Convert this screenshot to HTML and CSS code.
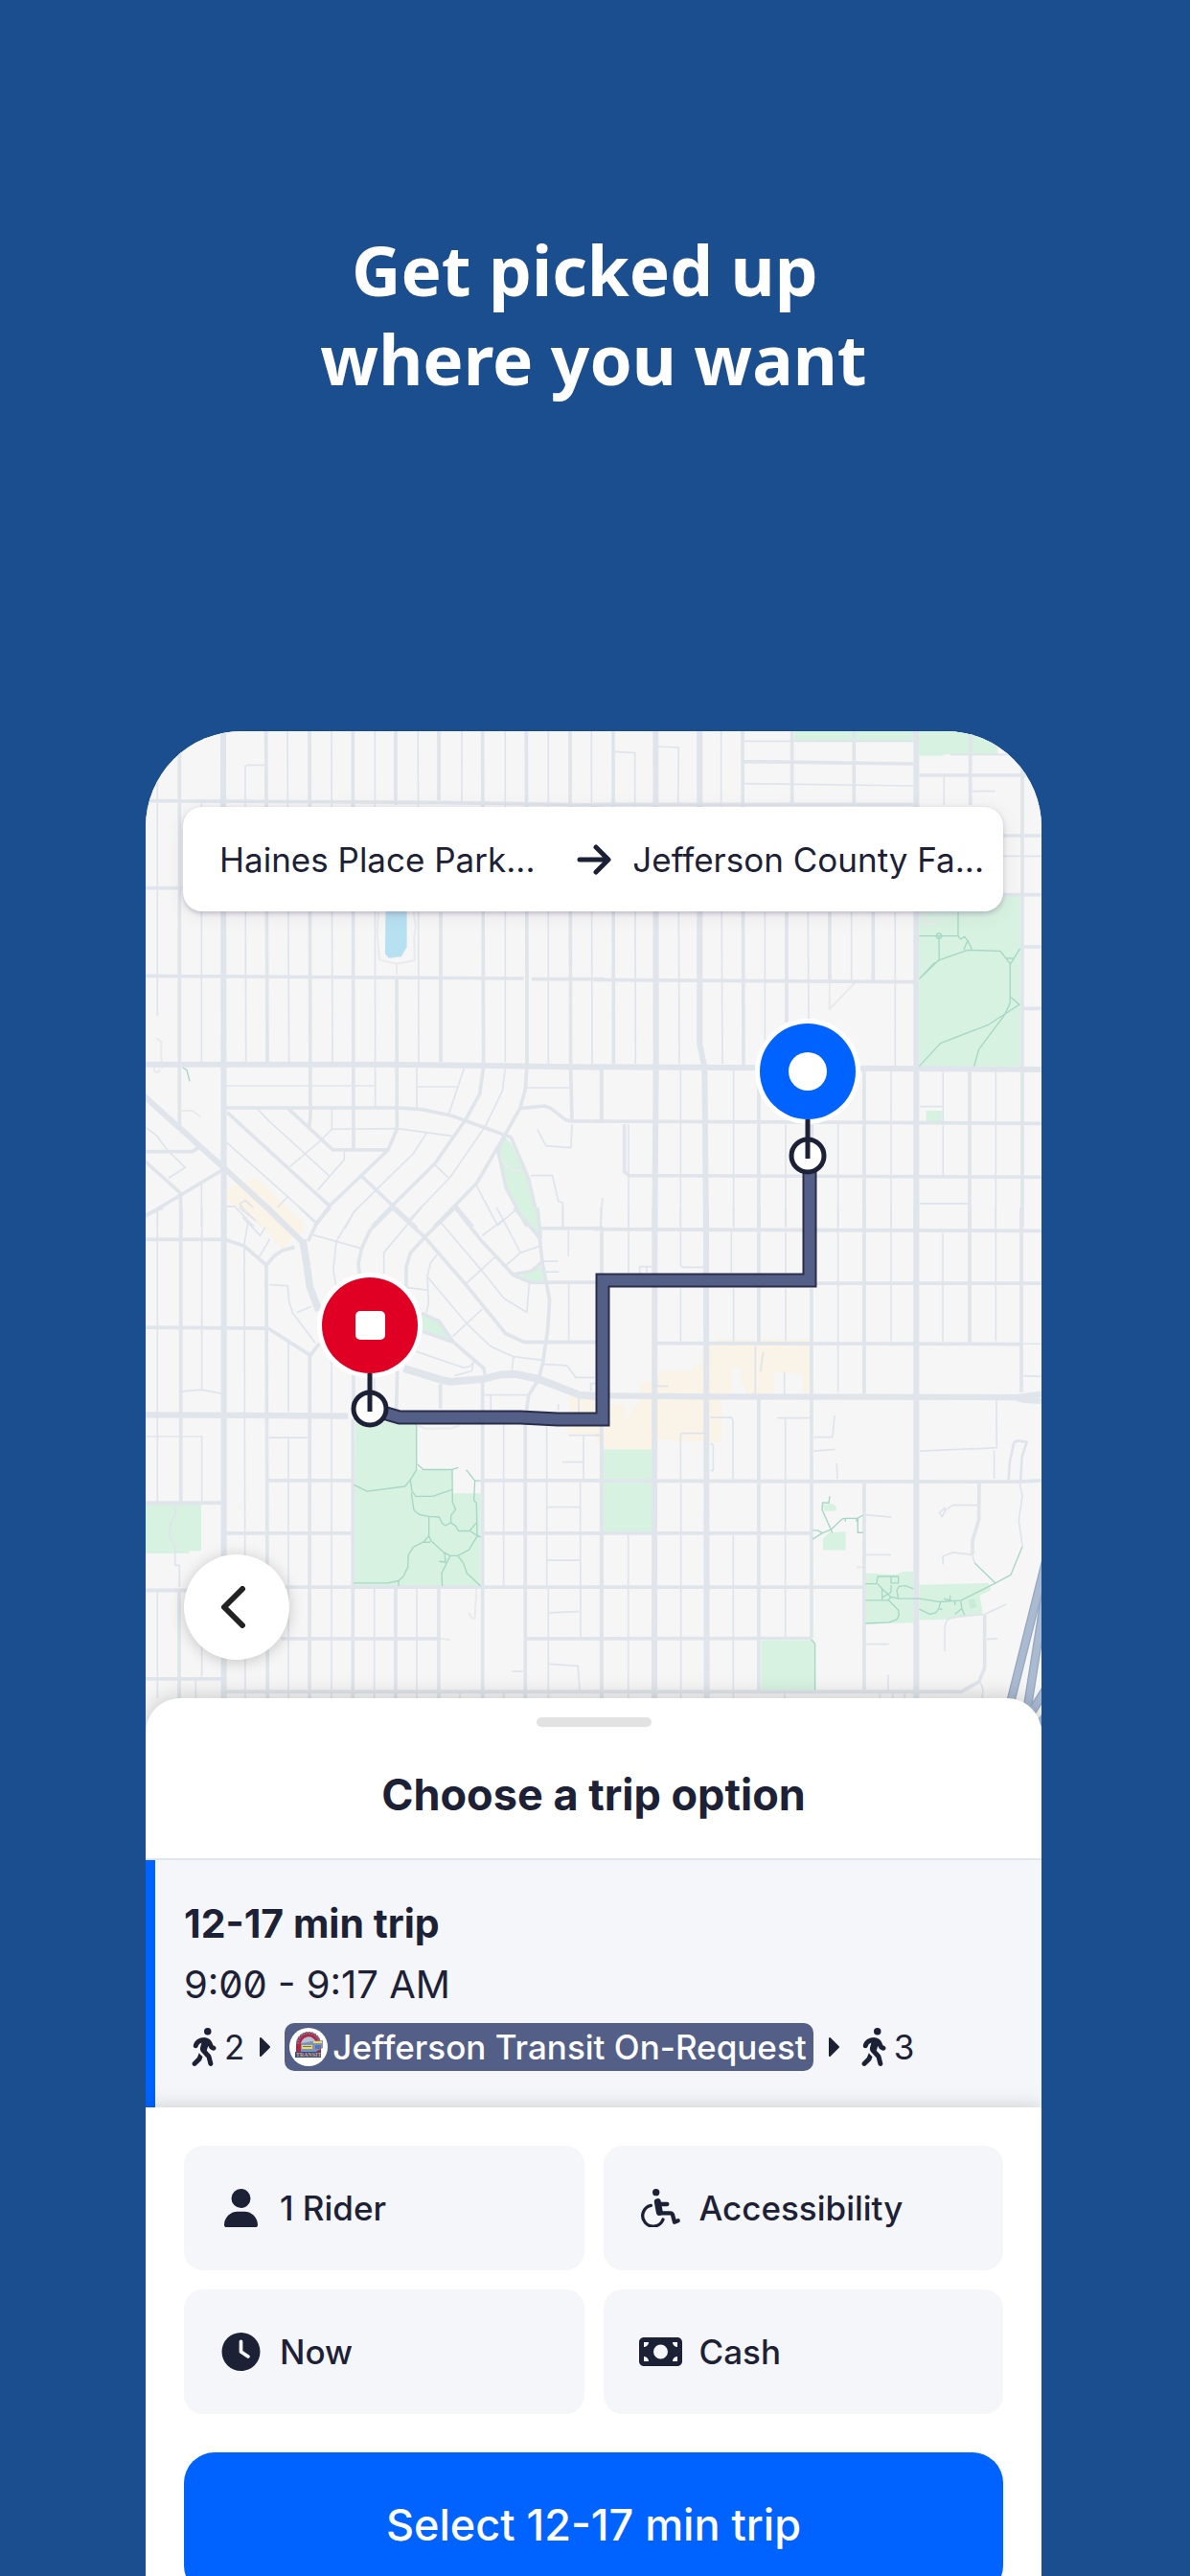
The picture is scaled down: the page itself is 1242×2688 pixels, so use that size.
FILE: index.html
```html
<!DOCTYPE html>
<html lang="en">
<head>
<meta charset="utf-8">
<meta name="viewport" content="width=device-width, initial-scale=1">
<title>Choose a trip option</title>
<link rel="stylesheet" href="styles.css">
</head>
<body>
<div class="page">
  <h1 class="headline">Get picked up&nbsp;<br>where you want</h1>
  <main class="phone">
    <section class="map" aria-label="Trip map">
      <svg class="map-art" viewBox="0 0 935 1069" preserveAspectRatio="xMidYMin slice" aria-hidden="true">
        <!-- north-west quarter -->
        <g transform="translate(-2 -3) scale(.3333)">
          <path class="sand" d="M262 1440L350 1408L400 1450L498 1550L498 1580H390L262 1475Z"/>
          <path class="water" d="M758 520H824V685L806 715L768 719L756 706Z"/>
          <path class="park" d="M1132 1280L1150 1300L1205 1410L1242 1570H1215L1135 1440L1110 1325Z"/>
          <path class="lane" d="M43 0V900M181 235V1050M318 235V120L325 115H385M318 235L320 1050M450 0L455 1050M588 0L591 1050M724 0L725 1185M859 0L861 1045M996 0V235M1132 0V1045M1267 0V1050M1402 0L1404 1055M255 1119H725M589 1190V1255L560 1285M589 1255L795 1253L970 1277M855 1060V1188M855 1122H980M1003 1065L956 1205M1200 1125H1335M1132 1065L1123 1135L1070 1245L960 1405L830 1540M355 1190L395 1232L580 1400M885 1268L845 1330L725 1448L660 1512L630 1565M628 1325V1350L545 1445M560 1285L458 1372M258 1295L545 1550M450 1467L410 1510M910 1365L955 1408M1212 1400H1280L1298 1480L1312 1485V1560M1232 1255L1260 1307L1338 1313L1341 1240M1042 1432L1108 1556L1165 1507M0 1245L40 1275L72 1318L130 1375L78 1408M181 1425V1560M43 1515V1560M255 1497H285L345 1560M300 1490L318 1478L380 1535L365 1550L300 1490M1437 1470L1430 1560"/>
          <path class="faint" d="M735 575L731 640L738 725L790 737L848 727L847 650L852 620L845 575M40 970L55 982V1065M33 1062V1072L42 1078L52 1070M118 1197H152L178 1216M1120 1350L1150 1380L1195 1386"/>
          <path class="street" d="M112 0V1245M383 0L387 1045M519 0L522 1215L518 1250M655 0L657 1320M789 0V240M792 780L793 1255L765 1320H592L452 1190M924 0V225M930 575V1045M1061 0L1064 1060L1052 1145L1008 1225L912 1362L778 1495L715 1560M1198 0L1200 770V1060L1195 1130L1178 1190L1130 1275L1042 1425L910 1560M1335 0L1337 1060L1341 1230H1440M1433 1065V1230M0 227L915 232L1440 240M0 500H120M0 775L1190 783M1215 785H1440M255 1188H800L870 1193L965 1213L1150 1280L1205 1410L1242 1570M1178 1190L1255 1182L1275 1190L1322 1226L1341 1230M1130 1275L1110 1325L1135 1440L1200 1560M262 1203L582 1495L535 1560M582 1495L765 1320M682 1402L855 1565M978 1497L1030 1560M0 1325H152L175 1310M0 1352L115 1455L118 1565M0 1530L118 1460L250 1380"/>
          <path class="faint" d="M792 739V772"/>
          <path class="road" d="M249 0L251 1565M0 1052L760 1052L1440 1061M0 1150L250 1375L450 1560"/>
          <path class="trail" d="M122 1062L135 1070L144 1105"/>
        </g>
        <!-- north-east quarter -->
        <g transform="translate(468 -3) scale(.3333)">
          <path class="park" d="M627 0H1000V42H627ZM1018 0H1264V82H1095V86H1018ZM1018 520H1335V1058H1018ZM1040 1197H1090V1232H1040Z"/>
          <path class="lane" d="M66 73L128 77V240L130 1050M200 57L265 60L263 240M265 575L267 1050M398 0V240L402 1050M470 40H1000M470 173L1000 180M535 575V1055M670 575L672 920M806 575V787M943 575V1058M1096 150V240M1184 197H1257M1115 82H1320M1282 400H1400M108 1240V1560M271 1070V1560M437 1070V1560M600 1240V1560M764 1240V1560M930 1075V1560M1020 1184H1092M1093 1075V1400M1258 1075V1560M1018 1488H1170"/>
          <path class="faint" d="M738 795L737 880L818 796M25 1470L20 1560M1035 575V612H1070V600"/>
          <path class="street" d="M60 0L61 1050M465 0L468 1055M620 0V230L610 240M603 575V920M738 575V790M874 575V790M814 0V240M1178 0V240M1341 100V1560M0 238H1000M470 104L1000 111M1018 147H1375M0 787L1005 794M1282 336H1400M1282 521H1400M1340 684H1400M1340 877H1400M24 1070V1230M95 1240V1388L110 1400L1400 1405M0 1230L1400 1237M516 1070V1560M682 1240V1560M846 1070V1560M1176 1075V1560"/>
          <path class="road" d="M193 0L194 1060L190 1565M331 0V990L346 1060L351 1565M1009 0V1565M0 1060L1400 1068"/>
          <path class="trail" d="M1018 650H1140V577M1080 650L1081 724L1018 785M1018 785L1060 740L1082 725L1170 694L1272 697L1304 738L1334 690M1292 720H1314M1140 650L1148 660L1160 652L1170 664L1158 694M1170 664L1183 692M1303 738V840L1332 865L1235 928L1085 986L1018 1058M1303 840V860L1285 898L1205 1005L1190 1058"/>
          <circle class="trail" cx="1080" cy="650" r="8"/>
        </g>
        <!-- south-west quarter -->
        <g transform="translate(-2 497) scale(.3333 .3444)">
          <path class="sand" d="M312 0H440L498 45L440 125L410 108L400 85ZM1335 570H1440V715H1418V685H1328V640H1335Z"/>
          <path class="park" d="M662 650H856V795H966V866H1055V1147H658ZM0 900H180V1040H143V1048H0ZM1170 0H1228L1242 95ZM1180 207L1245 178L1262 222H1210ZM868 318L925 345L975 410L870 370Z"/>
          <path class="lane" d="M43 0V895M182 0V555M120 557L182 552L245 564M43 694V890M0 694H182V890M182 1160V1420M43 1160V1487M163 1430V1487M327 40L315 110L318 1487M393 234L451 237L455 285L467 320L537 410M480 318L525 300M453 410V620M453 700V1487M588 460V1487M392 697H515M487 0L535 45M530 83L678 123M672 0L655 18L603 102L594 190L602 235M870 0L752 137V200M930 45L1055 187L1128 275L1200 318L1207 230M1105 0L1180 137L1238 118M1180 137L1135 175M1100 150L1008 232M1060 85L1130 35M918 143L898 168L888 210L892 290L885 318M890 212L1010 350L1085 420L1158 452L1250 463M1060 308L968 390M825 243L888 250M850 435L1000 485L1020 482L1032 470L1028 495L975 509M1158 452L1153 495M1255 475L1325 479L1353 515H1412M1066 568H1200M1087 570V615M1313 0V60M1330 70V148M1331 230V405M1250 163H1297M1260 195H1300M1298 595V615M1362 575V620M1400 555V533H1415M722 515V555M722 1155V1487M855 1155V1487M990 1465V1487M1127 640V1150M1127 1470V1487M1262 660V1145M1267 1155V1487M1367 833L1368 1300M1377 690V825M1312 771H1377M1330 690H1440M1260 908H1367M1260 1069H1367M1270 1228L1363 1224M1270 1383L1360 1389L1365 1465M1153 1406H1188M98 900V930L82 965V1000L98 1025V1084H112V1150"/>
          <path class="lane" d="M310 30L365 85L380 60M395 95L362 150M300 0L350 40"/>
          <path class="faint" d="M860 660L880 670L965 669L988 660M1042 1155L1037 1245H1030L1017 1228M930 1306L960 1310"/>
          <path class="street" d="M0 25L60 0M116 0V890M111 1160V1487M0 97H245M258 98L315 117L384 175L388 1487M384 175L408 147L435 130L472 120M0 363L390 366L522 448L550 412M520 448L519 1487M583 0L540 50L515 102M775 5L708 70L682 125L672 170L676 205M778 0L880 90L1010 235L1133 382L1192 408H1415M970 5L880 90L835 138L822 180V240L828 248M975 0L1055 98L1158 205L1212 227H1415M1160 0L1240 93L1248 165L1271 280L1265 370L1250 470L1237 520L1205 570L1198 620M1233 0L1243 93M1245 63H1440M1158 203L1215 193L1247 165M870 320L925 345L970 408L1065 487L1068 505M865 372L970 408M657 505V625M655 640V1487M794 495L791 610M929 535V610M1061 520V1487M1195 640V1487M1433 660V1487M390 827H655M0 895H245M258 987H655M0 1160H140M440 1150H1440M1060 827H1440M1060 987H1440M430 1306H925M1195 1306H1440M0 1428H245M255 1467H1440M789 1155V1487M924 1155V1487"/>
          <path class="road" d="M251 0V1487M0 628L640 632M375 -10L498 105"/>
          <path class="avenue" d="M498 98L510 170L520 240L548 312M815 488L935 523L960 528L1060 520L1120 506L1165 505L1235 519L1365 568L1415 572"/>
          <path class="trail" d="M854 655V795L835 825L840 860L852 875H905L966 855M835 825L818 845L700 860L658 840M858 778L875 794H966L985 788M966 795L967 893L977 915L962 933V955L945 964L935 957L925 938L893 936L862 930L846 917L838 865M893 936V995L900 1010L940 1045L960 1055H983L1018 1038L1045 995L1022 980H985L978 966L962 955M893 995L875 1014H898M875 1014L845 1028L829 1052L827 1090L813 1118L798 1131L765 1138H658M798 1131V1147M960 1055L933 1108L935 1147M942 1048L945 1075L925 1072M983 1055L1000 1075L1012 1108L1055 1147M1010 795L1037 828H1055M1037 828L1034 888L1042 895L1044 995L1055 998M1042 955L1020 980"/>
        </g>
        <!-- south-east quarter -->
        <g transform="translate(468 497) scale(.3333 .3444)">
          <path class="sand" d="M48 595H95L102 648L118 610L145 585V528H180V580H198V515L215 495H307V480H338V435L385 400H675V565H653V505L565 498V565H475V545L460 535V485H432V562L400 580V710H250V703H198L180 733H30V650H48Z"/>
          <path class="park" d="M30 733H180V982H30ZM850 1108L945 1113L968 1103H1000V1258L850 1262ZM1018 1143L1235 1138L1242 1160L1208 1175L1218 1233L1110 1248L1018 1250ZM523 1312H680L692 1325V1462H523ZM715 900L745 897L758 905V920H722ZM717 1005L735 985L788 982V1038H717Z"/>
          <path class="park-dark" d="M1172 1190L1190 1185L1198 1210L1178 1217Z"/>
          <path class="lane" d="M22 0V60M108 0V200M271 0V175L277 181H343M143 200V179H182M165 180V198M271 245V405M437 0V60M430 70V198M437 245V405M600 0V60M600 75V198M600 245V405M764 0V560M930 0V405M1092 78V405M1258 0V405M505 420V568M530 438L521 497M596 498V568M198 541H233M365 636H430L435 645V822M271 822V690L275 684H345M365 715L373 720V797H365M573 638H675M599 638V1305M688 696H747L753 630M688 738L755 733M760 775L762 822M1345 413H1400M1345 510L1400 512M1260 585L1261 728L1020 738M1253 735V822M107 993V1487M272 835V1487M436 993V1487M597 1470V1487M0 690H20M850 931L932 938M850 1052H930M850 1323H922M921 1415V1462M1200 902H1123L1100 918L1090 937L1081 925L1098 910V925M1185 1052L1125 1045L1092 1057L1093 1082M1333 835L1341 875L1330 950L1342 1028M1225 1232L1291 1202M1230 1308L1264 1306M1218 1233L1128 1240L1105 1250L1098 1270V1345M1210 1440L1218 1460L1215 1487M1185 1055L1192 1077M895 1472V1487M935 1472V1487M973 1472V1487M0 230H5"/>
          <path class="faint" d="M822 1090H845"/>
          <path class="street" d="M24 70V200M24 665V1487M0 66L1400 71M695 230H1400M198 411L1335 414M516 0V408M516 580V1465M681 245V1305M846 0V565M846 835V1465M1176 0V410M1338 0V560M0 828L1330 831L1400 827M0 987H680M0 1150H840M0 1306L680 1305M0 1467L1150 1467L1205 1437L1223 1395V1232M1206 835L1205 945L1185 1010V1052"/>
          <path class="lane wide" d="M1298 825L1302 770L1315 712L1325 707L1355 710L1340 755L1336 825"/>
          <path class="road" d="M190 0L189 1487M351 0L353 1487M1009 0L1009 1487M48 570L350 573L1325 575L1400 565M1325 578L1345 583L1400 586"/>
          <path class="highway-edge" d="M1414 1075L1300 1515M1412 1180L1348 1570M1440 1420L1350 1560"/>
          <path class="highway" d="M1414 1075L1300 1515M1412 1180L1348 1570M1440 1420L1350 1560M1440 1500L1380 1580"/>
          <path class="trail" d="M738 875L735 895L716 894L714 915L746 985M685 978H700L715 986L685 1005M715 986L742 976L775 945L785 942H825L842 932M787 942V952M822 942V952M826 942V985H842M850 1140H885L888 1118H953V1138H930V1120M888 1140L902 1155V1190M902 1155L930 1180L953 1185H1018L1085 1195L1150 1190L1257 1138L1305 1113L1341 1028M902 1182L930 1165V1145M930 1180L920 1190H850M922 1190L953 1220L955 1235L948 1248L925 1257L850 1260M953 1185L948 1160L955 1148L975 1146L1000 1155M1018 1217L1052 1232L1070 1228L1080 1215L1085 1195M1080 1215L1090 1218M1085 1195L1120 1192L1095 1185M1115 1175V1192M1130 1192V1205M1148 1192L1152 1215L1160 1235M1152 1215L1130 1232M1192 1077L1257 1138M680 1308L692 1322V1462"/>
        </g>
        <path class="route-edge" d="M693 443V573H477V718H430L391 716H265L234 707"/>
        <path class="route-line" d="M693 443V573H477V718H430L391 716H265L234 707"/>
        <g class="pin">
          <circle class="pin-foot" cx="691" cy="443" r="17"/>
          <circle class="pin-ring" cx="691" cy="355" r="55"/>
          <circle class="pin-start" cx="691" cy="355" r="50"/>
          <circle class="pin-ring" cx="691" cy="355" r="20"/>
          <path class="pin-stem" d="M691 405V446"/>
        </g>
        <g class="pin">
          <circle class="pin-foot" cx="234" cy="707" r="17"/>
          <circle class="pin-ring" cx="234" cy="620" r="55"/>
          <circle class="pin-end" cx="234" cy="620" r="50"/>
          <rect class="pin-ring" x="219" y="605" width="31" height="30" rx="5"/>
          <path class="pin-stem" d="M234 670V710"/>
        </g>
      </svg>
      <div class="route-bar">
        <span class="place">Haines Place Park...</span>
        <svg class="route-arrow" viewBox="0 0 36 32" aria-hidden="true"><path d="M3 16H32M20 3L33 16L20 29"/></svg>
        <span class="place">Jefferson County Fa...</span>
      </div>
      <button class="back" type="button" aria-label="Back">
        <svg viewBox="0 0 26 44" aria-hidden="true"><path d="M22 3L3 22L22 41"/></svg>
      </button>
    </section>

    <section class="sheet">
      <div class="handle"></div>
      <h2 class="sheet-title">Choose a trip option</h2>
      <article class="trip">
        <h3 class="trip-length">12-17 min trip</h3>
        <p class="trip-time">9:00 - 9:17 AM</p>
        <div class="legs">
          <svg class="walk" viewBox="-96 0 512 512" aria-hidden="true"><path d="M160 48a48 48 0 1 1 96 0 48 48 0 1 1 -96 0zM126.500 199.300c-1 .4-1.900 .8-2.900 1.200l-8 3.500c-16.400 7.300-29 21.200-34.700 38.200l-2.600 7.800c-5.600 16.800-23.700 25.800-40.500 20.200s-25.800-23.700-20.200-40.500l2.600-7.800c11.400-34.100 36.600-61.900 69.400-76.500l8-3.500c20.800-9.200 43.300-14 66.100-14c44.600 0 84.800 26.800 101.900 67.900L281 232.700l21.400 10.700c15.800 7.900 22.200 27.100 14.300 42.900s-27.100 22.200-42.900 14.300L247 287.300c-10.300-5.200-18.400-13.800-22.800-24.500l-9.600-23-19.300 65.500 49.500 54c5.400 5.900 9.200 13 11.200 20.800l23 92.100c4.300 17.100-6.100 34.500-23.300 38.800s-34.500-6.100-38.800-23.300l-22-88.100-70.700-77.100c-14.800-16.100-20.300-38.600-14.700-59.700l16.900-63.500zM68.700 398l25-62.400c2.100 3 4.500 5.800 7 8.600l40.700 44.400-14.500 36.200c-2.400 6-6 11.500-10.600 16.100L54.600 502.600c-12.500 12.500-32.800 12.500-45.300 0s-12.500-32.800 0-45.300L68.700 398z"/></svg>
          <span>2</span>
          <svg class="caret" viewBox="0 0 40 40" aria-hidden="true"><path d="M16 11L25 20L16 29Z"/></svg>
          <span class="service">
            <svg class="service-logo" viewBox="0 0 40 40" aria-hidden="true">
              <circle cx="20" cy="20" r="20" fill="#fff"/>
              <path d="M7 26V18A13 13 0 0 1 33 17V26Z" fill="#b3243f"/>
              <path d="M9 17A11 10 0 0 1 31 14" fill="none" stroke="#7e6a86" stroke-width="3" stroke-dasharray="2 1"/>
              <path d="M12 25V19A8 8 0 0 1 28 16V25Z" fill="#b4c2d8"/>
              <path d="M12 16L24 14L35 13V21L27 25H12Z" fill="#8292b4"/>
              <path d="M13 18H24V22H13ZM25 14H34V16H25Z" fill="#e9db62"/>
              <path d="M14 19H23V20H14ZM27 18H33V22H27Z" fill="#5c76ad"/>
              <path d="M6 25H33V31H6Z" fill="#27518f"/>
              <text x="20" y="30" text-anchor="middle" font-family="Liberation Serif, serif" font-weight="700" font-size="6" fill="#efa06c">TRANSIT</text>
            </svg>
            Jefferson Transit On-Request
          </span>
          <svg class="caret" viewBox="0 0 40 40" aria-hidden="true"><path d="M16 11L25 20L16 29Z"/></svg>
          <svg class="walk" viewBox="-96 0 512 512" aria-hidden="true"><path d="M160 48a48 48 0 1 1 96 0 48 48 0 1 1 -96 0zM126.500 199.300c-1 .4-1.900 .8-2.900 1.200l-8 3.500c-16.400 7.300-29 21.200-34.700 38.200l-2.600 7.800c-5.600 16.800-23.700 25.800-40.500 20.200s-25.800-23.700-20.200-40.500l2.600-7.800c11.400-34.100 36.600-61.900 69.400-76.500l8-3.500c20.800-9.200 43.300-14 66.100-14c44.600 0 84.800 26.800 101.900 67.900L281 232.700l21.400 10.700c15.800 7.900 22.200 27.100 14.300 42.900s-27.100 22.200-42.900 14.300L247 287.300c-10.300-5.200-18.400-13.800-22.800-24.500l-9.600-23-19.300 65.500 49.500 54c5.400 5.900 9.200 13 11.200 20.800l23 92.100c4.300 17.100-6.100 34.500-23.300 38.800s-34.500-6.100-38.800-23.300l-22-88.100-70.700-77.100c-14.800-16.100-20.300-38.600-14.700-59.700l16.900-63.500zM68.700 398l25-62.400c2.100 3 4.500 5.800 7 8.600l40.700 44.400-14.500 36.200c-2.400 6-6 11.500-10.600 16.100L54.600 502.600c-12.500 12.500-32.800 12.500-45.300 0s-12.500-32.800 0-45.300L68.700 398z"/></svg>
          <span>3</span>
        </div>
      </article>

      <div class="actions">
        <div class="options">
          <button class="option" type="button">
            <svg viewBox="-64 0 576 512" aria-hidden="true"><path d="M224 256A128 128 0 1 0 224 0a128 128 0 1 0 0 256zm-45.700 48C79.800 304 0 383.800 0 482.300C0 498.700 13.300 512 29.700 512H418.300c16.400 0 29.700-13.300 29.700-29.700C448 383.800 368.200 304 269.700 304H178.300z"/></svg>
            1 Rider
          </button>
          <button class="option" type="button">
            <svg viewBox="-8 0 135 120" aria-hidden="true">
              <circle cx="45" cy="11" r="11"/>
              <path d="M50 41L56 73" fill="none" stroke="currentColor" stroke-width="21" stroke-linecap="round"/>
              <path d="M54 48H80M58 76H90Q95 76 97 81L103 104L114 100" fill="none" stroke="currentColor" stroke-width="13" stroke-linecap="round" stroke-linejoin="round"/>
              <path d="M29 52A33 33 0 1 0 67 96" fill="none" stroke="currentColor" stroke-width="10" stroke-linecap="round"/>
            </svg>
            Accessibility
          </button>
          <button class="option" type="button">
            <svg viewBox="-32 0 576 512" aria-hidden="true"><path d="M256 0a256 256 0 1 1 0 512A256 256 0 1 1 256 0zM232 120V256c0 8 4 15.500 10.700 20l96 64c11 7.400 25.900 4.400 33.300-6.700s4.400-25.900-6.700-33.300L280 243.200V120c0-13.300-10.700-24-24-24s-24 10.700-24 24z"/></svg>
            Now
          </button>
          <button class="option" type="button">
            <svg viewBox="0 0 576 512" aria-hidden="true"><path d="M64 64C28.700 64 0 92.700 0 128V384c0 35.300 28.700 64 64 64H512c35.300 0 64-28.700 64-64V128c0-35.300-28.700-64-64-64H64zm64 320H64V320c35.300 0 64 28.700 64 64zM64 192V128h64c0 35.300-28.700 64-64 64zM448 384c0-35.300 28.700-64 64-64v64H448zm64-192c-35.300 0-64-28.700-64-64h64v64zM288 160a96 96 0 1 1 0 192 96 96 0 1 1 0-192z"/></svg>
            Cash
          </button>
        </div>
        <button class="select" type="button">Select 12-17 min trip</button>
      </div>
    </section>
  </main>
</div>
</body>
</html>
```

FILE: styles.css
```css
* { box-sizing: border-box; }

body {
  margin: 0;
  background: #1a4e8f;
  color: #1d2136;
  font-family: Inter, "Liberation Sans", sans-serif;
}

button {
  border: 0;
  color: inherit;
  font: inherit;
}

.page {
  height: 100vh;
  overflow: hidden;
  padding: 235px 155px 0 152px;
}

.headline {
  margin: 0 0 342px;
  color: #fff;
  font: 700 71px/93px "Noto Sans", "Open Sans", sans-serif;
  text-align: center;
}

.phone {
  border-radius: 100px 100px 0 0;
  overflow: hidden;
  background: #fff;
}

/* Map */
.map { position: relative; background: #f6f6f6; }
.map-art { display: block; width: 100%; height: auto; }
.map-art path { fill: none; stroke-linejoin: round; }
.map-art .park { fill: #d8f2e1; }
.map-art .park-dark { fill: #c8ebd6; }
.map-art .sand { fill: #faf3e7; }
.map-art .water { fill: #b7e1f0; }
.lane { stroke: #dfe4ec; stroke-width: 5; }
.lane.wide { stroke-width: 8; }
.faint { stroke: #e9eaec; stroke-width: 6; }
.street { stroke: #dfe5ea; stroke-width: 11; }
.road { stroke: #dfe5ea; stroke-width: 18; }
.avenue { stroke: #dfe5ea; stroke-width: 23; }
.trail { fill: none; stroke: #a6d6c5; stroke-width: 4; }
.highway-edge { stroke: #97a8bf; stroke-width: 28; }
.highway { stroke: #aabad1; stroke-width: 20; }
.map-art .route-edge, .map-art .route-line { stroke-linejoin: miter; }
.route-edge { stroke: #2b2e4a; stroke-width: 15; }
.route-line { stroke: #535f87; stroke-width: 11; }
.pin-foot { fill: #fff; stroke: #1d2136; stroke-width: 5; }
.pin-ring { fill: #fff; }
.pin-start { fill: #0062ff; }
.pin-end { fill: #df0024; }
.pin-stem { stroke: #1d2136; stroke-width: 5; }

.route-bar {
  position: absolute;
  top: 79px;
  left: 39px;
  right: 40px;
  height: 109px;
  padding: 0 20px 0 38px;
  display: flex;
  align-items: center;
  justify-content: space-between;
  border-radius: 20px;
  background: #fff;
  box-shadow: 0 2px 5px rgba(60, 40, 90, .25), 0 4px 20px rgba(60, 40, 90, .08);
  font-size: 35px;
  white-space: nowrap;
}
.route-arrow { width: 36px; height: 32px; margin: 0 22px 0 auto; }
.route-arrow path, .back path {
  fill: none;
  stroke: #1d2136;
  stroke-width: 5;
  stroke-linecap: round;
  stroke-linejoin: round;
}

.back {
  position: absolute;
  left: 40px;
  bottom: 100px;
  width: 110px;
  height: 110px;
  padding: 0 6px 0 0;
  display: grid;
  place-items: center;
  border-radius: 50%;
  background: #fff;
  box-shadow: 0 2px 16px rgba(0, 0, 0, .2);
}
.back svg { width: 26px; height: 44px; }
.back path { stroke: #222; stroke-width: 6; }

/* Bottom sheet */
.sheet {
  position: relative;
  margin-top: -60px;
  padding-top: 20px;
  border-radius: 36px 36px 0 0;
  background: #fff;
  box-shadow: 0 0 24px rgba(0, 0, 0, .2);
}
.handle {
  width: 120px;
  height: 10px;
  margin: 0 auto;
  border-radius: 5px;
  background: #e2e2e2;
}
.sheet-title {
  margin: 0;
  padding: 42px 0 37px;
  border-bottom: 2px solid #e1e5ee;
  font-size: 45px;
  line-height: 58px;
  text-align: center;
}

.trip {
  padding: 42px 30px 38px;
  border-left: 10px solid #0062ff;
  background: #f5f6fa;
}
.trip-length, .trip-time { margin: 0; line-height: 48px; }
.trip-length { font-size: 41px; }
.trip-time { margin: 16px 0; font-size: 40px; font-feature-settings: "zero"; }
.legs {
  display: flex;
  align-items: center;
  font-size: 35px;
  line-height: 50px;
  white-space: nowrap;
}
.walk, .caret { flex: none; width: 42px; height: 40px; fill: currentColor; }
.caret path { stroke: currentColor; stroke-width: 2; stroke-linejoin: round; }
.service {
  display: flex;
  align-items: center;
  gap: 5px;
  padding: 0 7px 0 5px;
  border-radius: 10px;
  background: #535f87;
  color: #fff;
  font-weight: 500;
}
.service-logo { width: 40px; height: 40px; }

.actions {
  position: relative;
  padding: 40px;
  background: #fff;
  box-shadow: 0 0 20px rgba(0, 0, 0, .18);
}
.options {
  display: grid;
  grid-template-columns: 1fr 1fr;
  gap: 20px;
}
.option {
  display: flex;
  align-items: center;
  gap: 18px;
  height: 130px;
  padding: 0 37px;
  border-radius: 20px;
  background: #f5f6fa;
  font-size: 35px;
  font-weight: 500;
}
.option svg { width: 45px; height: 40px; fill: currentColor; }
.select {
  width: 100%;
  height: 150px;
  margin-top: 40px;
  border-radius: 32px;
  background: #0062ff;
  color: #fff;
  font-size: 45px;
  font-weight: 500;
}
```
